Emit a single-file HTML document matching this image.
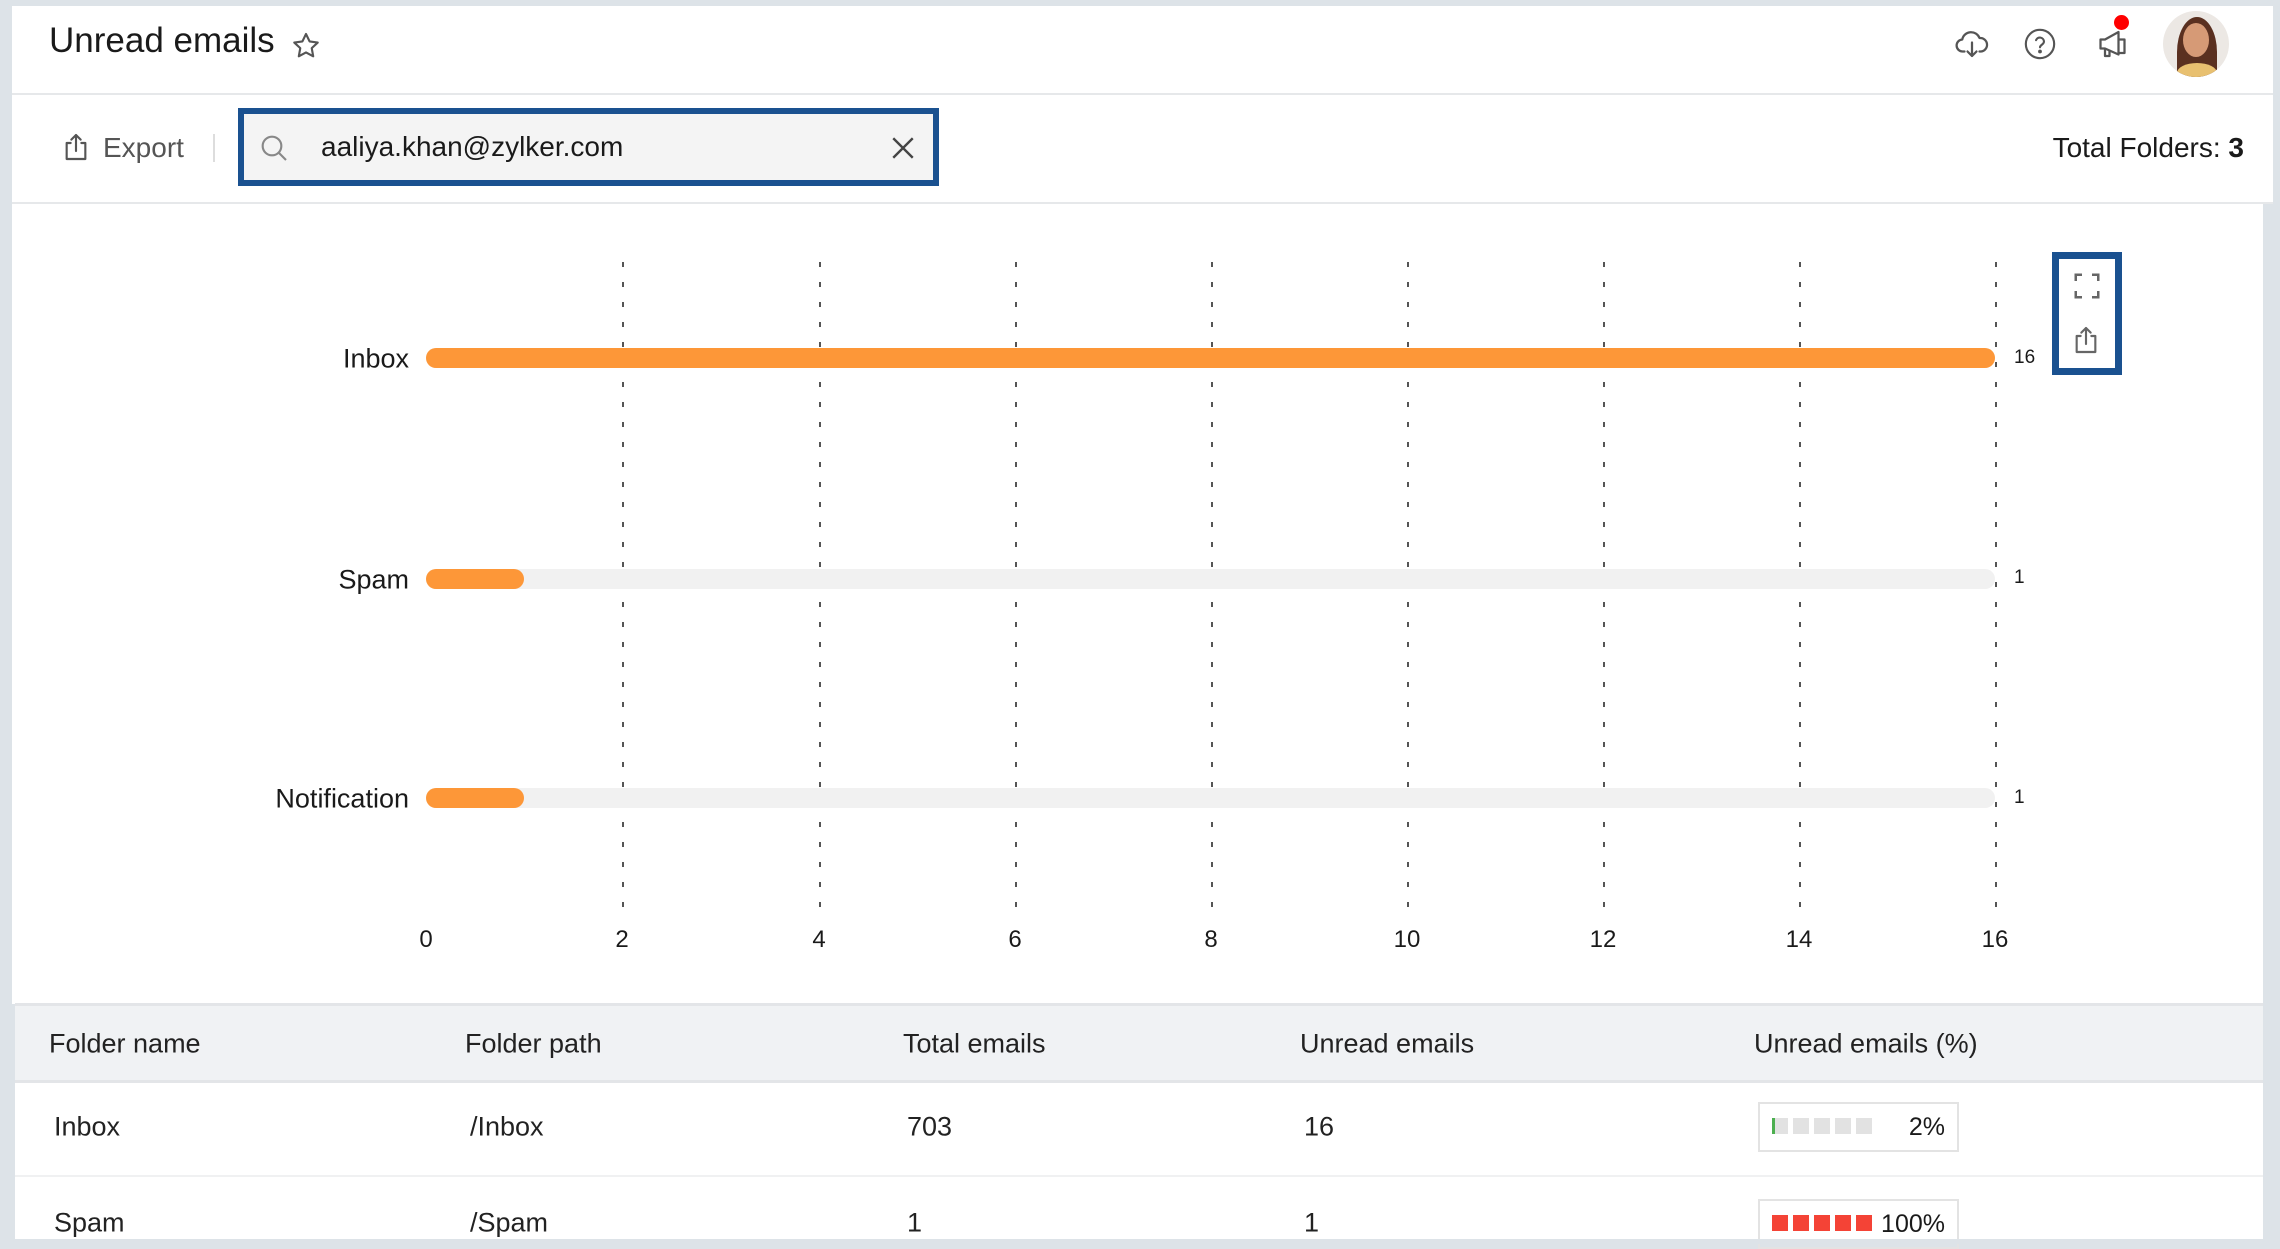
<!DOCTYPE html>
<html><head><meta charset="utf-8"><style>
*{margin:0;padding:0;box-sizing:border-box}
body{width:2280px;height:1244px;background:#dde3e8;font-family:"Liberation Sans",sans-serif;position:relative;overflow:hidden;color:#1a1a1a}
.abs{position:absolute}
.panel{position:absolute;left:12px;top:6px;width:2261px;background:#fff}
.t{position:absolute;white-space:nowrap}
.grid{position:absolute;top:262px;height:654px;width:2px;background:repeating-linear-gradient(to bottom,#555 0 5px,transparent 5px 20px)}
.track{position:absolute;left:426px;width:1569px;height:20px;border-radius:10px;background:#f1f1f1}
.bar{position:absolute;left:426px;height:20px;border-radius:10px;background:#fd9738}
.lbl{position:absolute;right:1871px;font-size:27px;transform:translateY(-50%)}
.ax{position:absolute;top:926px;font-size:24px;transform:translateX(-50%)}
.val{position:absolute;left:2014px;font-size:19px;transform:translateY(-50%)}
.th{position:absolute;top:1044px;font-size:27px;transform:translateY(-50%);color:#222}
.td{position:absolute;font-size:27px;transform:translateY(-50%);color:#222}
.sq{display:inline-block;width:16px;height:16px;margin-right:5px;vertical-align:middle}
</style></head><body>
<div class="panel" style="top:6px;height:87px;"></div>
<div class="abs" style="left:12px;top:93px;width:2261px;height:2px;background:#e6e8ea"></div>
<div class="panel" style="top:95px;height:107px;"></div>
<div class="abs" style="left:12px;top:202px;width:2261px;height:2px;background:#e6e8ea"></div>
<div class="panel" style="top:204px;height:800px;width:2251px"></div>
<div class="t" style="left:49px;top:21px;font-size:35px;">Unread emails</div>
<svg class="abs" style="left:290px;top:30px" width="32" height="32" viewBox="0 0 24 24"><path d="M12 3l2.7 5.6 6.1.8-4.5 4.2 1.1 6.1L12 16.8 6.6 19.7l1.1-6.1L3.2 9.4l6.1-.8z" fill="none" stroke="#555" stroke-width="1.6" stroke-linejoin="round"/></svg>
<svg class="abs" style="left:1954px;top:26px" width="36" height="36" viewBox="0 0 24 24" fill="none" stroke="#555" stroke-width="1.5" stroke-linecap="round" stroke-linejoin="round"><path d="M7 17H6a4 4 0 0 1-.5-8A6 6 0 0 1 17 8a4.5 4.5 0 0 1 1 9h-1"/><path d="M12 11v9M9 17l3 3 3-3"/></svg>
<svg class="abs" style="left:2023px;top:27px" width="34" height="34" viewBox="0 0 24 24" fill="none" stroke="#555" stroke-width="1.5"><circle cx="12" cy="12" r="10"/><path d="M9.2 9.3a2.9 2.9 0 0 1 5.6 1c0 2-2.8 2.4-2.8 4" stroke-linecap="round"/><circle cx="12" cy="17.3" r=".6" fill="#555"/></svg>
<svg class="abs" style="left:2096px;top:26px" width="36" height="36" viewBox="0 0 24 24" fill="none" stroke="#555" stroke-width="1.5" stroke-linejoin="round"><path d="M3 9h3l9-5v15l-9-4H3z"/><path d="M15 9h4v9h-4M6 15v5h3v-4"/></svg>
<div class="abs" style="left:2114px;top:15px;width:15px;height:15px;border-radius:50%;background:#f00"></div>
<div class="abs" style="left:2163px;top:11px;width:66px;height:66px;border-radius:50%;background:#ece8e4;overflow:hidden">
<div class="abs" style="left:14px;top:6px;width:40px;height:70px;border-radius:50% 50% 20% 20%;background:#5a3020"></div>
<div class="abs" style="left:20px;top:12px;width:26px;height:34px;border-radius:50%;background:#d69a76"></div>
<div class="abs" style="left:14px;top:52px;width:40px;height:20px;border-radius:50% 50% 0 0;background:#e8c070"></div>
</div>
<svg class="abs" style="left:60px;top:131px" width="32" height="32" viewBox="0 0 24 24" fill="none" stroke="#555" stroke-width="1.6" stroke-linecap="round" stroke-linejoin="round"><path d="M8 9H5v12h14V9h-3M12 3v12M8.5 6.5 12 3l3.5 3.5"/></svg>
<div class="t" style="left:103px;top:132px;font-size:28px;color:#555">Export</div>
<div class="abs" style="left:213px;top:134px;width:2px;height:28px;background:#ddd"></div>
<div class="abs" style="left:238px;top:108px;width:701px;height:78px;border:6px solid #1a5190;background:#f4f4f4"></div>
<svg class="abs" style="left:258px;top:132px" width="32" height="32" viewBox="0 0 24 24" fill="none" stroke="#888" stroke-width="1.6"><circle cx="10.5" cy="10.5" r="7"/><path d="M15.5 15.5 21 21"/></svg>
<div class="t" style="left:321px;top:131px;font-size:28px;">aaliya.khan@zylker.com</div>
<svg class="abs" style="left:890px;top:135px" width="26" height="26" viewBox="0 0 24 24" stroke="#444" stroke-width="2.2"><path d="M3 3l18 18M21 3 3 21"/></svg>
<div class="t" style="right:36px;top:132px;font-size:28px;">Total Folders: <b>3</b></div>

<div class="grid" style="left:622px"></div><div class="grid" style="left:819px"></div><div class="grid" style="left:1015px"></div><div class="grid" style="left:1211px"></div><div class="grid" style="left:1407px"></div><div class="grid" style="left:1603px"></div><div class="grid" style="left:1799px"></div><div class="grid" style="left:1995px"></div>
<div class="track" style="top:348px"></div><div class="bar" style="top:348px;width:1569px"></div>
<div class="track" style="top:569px"></div><div class="bar" style="top:569px;width:98px"></div>
<div class="track" style="top:788px"></div><div class="bar" style="top:788px;width:98px"></div>
<div class="lbl" style="top:359px">Inbox</div>
<div class="lbl" style="top:580px">Spam</div>
<div class="lbl" style="top:799px">Notification</div>
<div class="val" style="top:358px">16</div><div class="val" style="top:578px">1</div><div class="val" style="top:798px">1</div>
<div class="ax" style="left:426px">0</div><div class="ax" style="left:622px">2</div><div class="ax" style="left:819px">4</div><div class="ax" style="left:1015px">6</div><div class="ax" style="left:1211px">8</div><div class="ax" style="left:1407px">10</div><div class="ax" style="left:1603px">12</div><div class="ax" style="left:1799px">14</div><div class="ax" style="left:1995px">16</div>
<div class="abs" style="left:2052px;top:252px;width:70px;height:123px;border:7px solid #1a5190;background:#fff"></div>
<svg class="abs" style="left:2072px;top:271px" width="30" height="30" viewBox="0 0 24 24" fill="none" stroke="#666" stroke-width="2"><path d="M3 8V3h5M16 3h5v5M21 16v5h-5M8 21H3v-5"/></svg>
<svg class="abs" style="left:2070px;top:324px" width="32" height="32" viewBox="0 0 24 24" fill="none" stroke="#666" stroke-width="1.6" stroke-linecap="round" stroke-linejoin="round"><path d="M8 9H5v12h14V9h-3M12 3v12M8.5 6.5 12 3l3.5 3.5"/></svg>

<div class="abs" style="left:15px;top:1003px;width:2248px;height:3px;background:#e3e5e8"></div>
<div class="abs" style="left:15px;top:1006px;width:2248px;height:74px;background:#f0f2f4"></div>
<div class="abs" style="left:15px;top:1080px;width:2248px;height:3px;background:#e3e5e8"></div>
<div class="abs" style="left:15px;top:1083px;width:2248px;height:160px;background:#fff"></div>
<div class="abs" style="left:15px;top:1175px;width:2248px;height:2px;background:#f0f1f2"></div>
<div class="th" style="left:49px">Folder name</div><div class="th" style="left:465px">Folder path</div><div class="th" style="left:903px">Total emails</div><div class="th" style="left:1300px">Unread emails</div><div class="th" style="left:1754px">Unread emails (%)</div>
<div class="td" style="left:54px;top:1127px">Inbox</div><div class="td" style="left:470px;top:1127px">/Inbox</div><div class="td" style="left:907px;top:1127px">703</div><div class="td" style="left:1304px;top:1127px">16</div>
<div class="td" style="left:54px;top:1223px">Spam</div><div class="td" style="left:470px;top:1223px">/Spam</div><div class="td" style="left:907px;top:1223px">1</div><div class="td" style="left:1304px;top:1223px">1</div>
<div class="abs" style="left:1758px;top:1102px;width:201px;height:50px;border:2px solid #e3e3e3;padding:14px 0 0 12px;font-size:0"><span class="sq" style="width:3px;background:#4caf50;margin-right:0"></span><span class="sq" style="width:13px;background:#e2e2e2"></span><span class="sq" style="background:#e2e2e2"></span><span class="sq" style="background:#e2e2e2"></span><span class="sq" style="background:#e2e2e2"></span><span class="sq" style="background:#e2e2e2"></span><span style="position:absolute;right:12px;top:9px;font-size:25px">2%</span></div>
<div class="abs" style="left:1758px;top:1199px;width:201px;height:50px;border:2px solid #e3e3e3;padding:14px 0 0 12px;font-size:0"><span class="sq" style="background:#f44336"></span><span class="sq" style="background:#f44336"></span><span class="sq" style="background:#f44336"></span><span class="sq" style="background:#f44336"></span><span class="sq" style="background:#f44336"></span><span style="position:absolute;right:12px;top:9px;font-size:25px">100%</span></div>
<div class="abs" style="left:0;top:1239px;width:2280px;height:5px;background:#dde3e8"></div>
</body></html>
